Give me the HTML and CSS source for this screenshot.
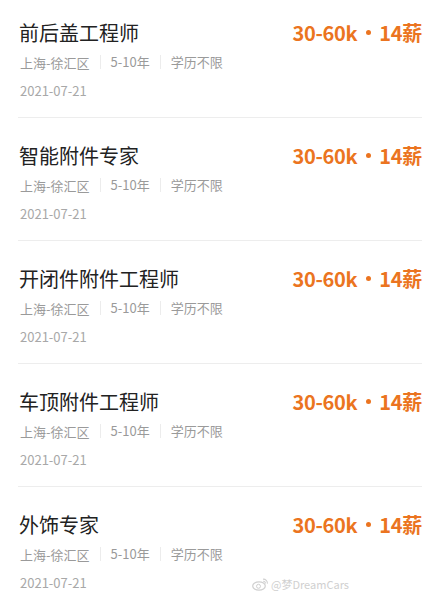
FILE: index.html
```html
<!DOCTYPE html>
<html lang="zh-CN">
<head>
    <meta charset="UTF-8">
    <meta name="viewport" content="width=device-width, initial-scale=1.0">
    <title>职位列表</title>
    <link rel="stylesheet" href="styles.css">
</head>
<body>
    <ul class="job-list">
        <li class="job">
            <div class="job-head">
                <span class="job-title">前后盖工程师</span>
                <span class="job-salary">30-60k<i class="dot"></i>14薪</span>
            </div>
            <div class="job-tags">
                <span>上海-徐汇区</span><span>5-10年</span><span>学历不限</span>
            </div>
            <div class="job-date">2021-07-21</div>
        </li>
        <li class="job">
            <div class="job-head">
                <span class="job-title">智能附件专家</span>
                <span class="job-salary">30-60k<i class="dot"></i>14薪</span>
            </div>
            <div class="job-tags">
                <span>上海-徐汇区</span><span>5-10年</span><span>学历不限</span>
            </div>
            <div class="job-date">2021-07-21</div>
        </li>
        <li class="job">
            <div class="job-head">
                <span class="job-title">开闭件附件工程师</span>
                <span class="job-salary">30-60k<i class="dot"></i>14薪</span>
            </div>
            <div class="job-tags">
                <span>上海-徐汇区</span><span>5-10年</span><span>学历不限</span>
            </div>
            <div class="job-date">2021-07-21</div>
        </li>
        <li class="job">
            <div class="job-head">
                <span class="job-title">车顶附件工程师</span>
                <span class="job-salary">30-60k<i class="dot"></i>14薪</span>
            </div>
            <div class="job-tags">
                <span>上海-徐汇区</span><span>5-10年</span><span>学历不限</span>
            </div>
            <div class="job-date">2021-07-21</div>
        </li>
        <li class="job">
            <div class="job-head">
                <span class="job-title">外饰专家</span>
                <span class="job-salary">30-60k<i class="dot"></i>14薪</span>
            </div>
            <div class="job-tags">
                <span>上海-徐汇区</span><span>5-10年</span><span>学历不限</span>
            </div>
            <div class="job-date">2021-07-21</div>
        </li>
    </ul>

    <div class="watermark">
        <svg width="17" height="14" viewBox="0 0 17 14">
            <ellipse cx="7" cy="9" rx="6.3" ry="4.2" fill="none" stroke="#d0d0d0" stroke-width="1.2"/>
            <circle cx="6.5" cy="9.3" r="2" fill="none" stroke="#d0d0d0" stroke-width="1"/>
            <path d="M11 2.2a4 4 0 0 1 4.4 4.4M11.2 4.3a2 2 0 0 1 2.2 2.2" fill="none" stroke="#d0d0d0" stroke-width="1.1"/>
        </svg>
        <span>@梦DreamCars</span>
    </div>
</body>
</html>
```

FILE: styles.css
```css
body {
    margin: 0;
    background: #fff;
    font-family: "Noto Sans CJK SC", "Noto Sans", sans-serif;
    position: relative;
    height: 595px;
    overflow: hidden;
}
.job-list {
    list-style: none;
    margin: 0;
    padding: 0 18px;
}
.job {
    padding: 23px 0 17px;
    border-bottom: 1px solid #ededed;
}
.job:first-child {
    padding-top: 18px;
}
.job-head {
    display: flex;
    justify-content: space-between;
    align-items: center;
    height: 28px;
}
.job-title {
    font-size: 20px;
    color: #222;
    padding-left: 1px;
}
.job-salary {
    display: flex;
    align-items: center;
    font-size: 20px;
    font-weight: bold;
    color: #eb7420;
    letter-spacing: -0.3px;
}
.job-salary .dot {
    width: 5px;
    height: 5px;
    border-radius: 50%;
    background: #eb7420;
    margin: 1px 8px 0 9px;
}
.job-tags {
    display: flex;
    align-items: center;
    margin-top: 6px;
    height: 20px;
    font-size: 13px;
    color: #9a9a9a;
    padding-left: 2px;
}
.job-tags span + span {
    border-left: 1px solid #ececec;
    margin-left: 10px;
    padding-left: 10px;
    line-height: 14px;
}
.job-date {
    margin-top: 10px;
    height: 18px;
    line-height: 18px;
    font-size: 13px;
    color: #a8a8a8;
    padding-left: 2px;
}
.watermark {
    position: absolute;
    left: 252px;
    top: 576px;
    display: flex;
    align-items: center;
    gap: 2px;
    font-size: 11px;
    color: #d0d0d0;
}
```
